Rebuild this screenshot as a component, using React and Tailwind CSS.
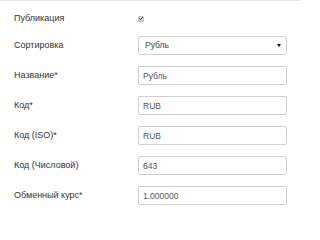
import React from 'react';

const fields = [
    { label: 'Название*', value: 'Рубль' },
    { label: 'Код*', value: 'RUB' },
    { label: 'Код (ISO)*', value: 'RUB' },
    { label: 'Код (Числовой)', value: '643' },
    { label: 'Обменный курс*', value: '1.000000' },
];

const Label = ({ children }) => (
    <div className="w-[138px] shrink-0 pl-[14px] text-[9px] text-[#333]">{children}</div>
);

const App = () => {
    return (
        <div
            className="w-[300px] h-[219px] bg-white border-t border-[#e6e6e6] overflow-hidden"
            style={{ fontFamily: '"Liberation Sans", Arial, sans-serif' }}
        >
            <div className="pt-[8px]">
                {/* publish */}
                <div className="flex items-center h-[19px]">
                    <Label>Публикация</Label>
                    <span className="flex items-center justify-center w-[6px] h-[6px] bg-[#d6d6d6] border border-[#bdbdbd] rounded-[1px]">
                        <svg width="5" height="5" viewBox="0 0 5 5">
                            <path d="M0.6 2.6 L1.9 3.9 L4.4 1" stroke="#222" strokeWidth="1.2" fill="none" />
                        </svg>
                    </span>
                </div>

                {/* sort */}
                <div className="flex items-center h-[19px] mt-[8px]">
                    <Label>Сортировка</Label>
                    <div className="flex items-center justify-between w-[149px] h-[19px] border border-[#cfcfcf] rounded-[2px] pl-[6px] pr-[5px] text-[8.5px] text-[#444]">
                        <span>Рубль</span>
                        <svg width="4" height="3" viewBox="0 0 4 3">
                            <path d="M0 0 H4 L2 3 Z" fill="#111" />
                        </svg>
                    </div>
                </div>

                {fields.map((f) => (
                    <div key={f.label} className="flex items-center h-[19px] mt-[11px]">
                        <Label>{f.label}</Label>
                        <input
                            readOnly
                            value={f.value}
                            className="w-[149px] h-[19px] border border-[#cfcfcf] rounded-[2px] px-[4px] text-[8.5px] text-[#555] outline-none"
                        />
                    </div>
                ))}
            </div>
        </div>
    );
};

export default App;
